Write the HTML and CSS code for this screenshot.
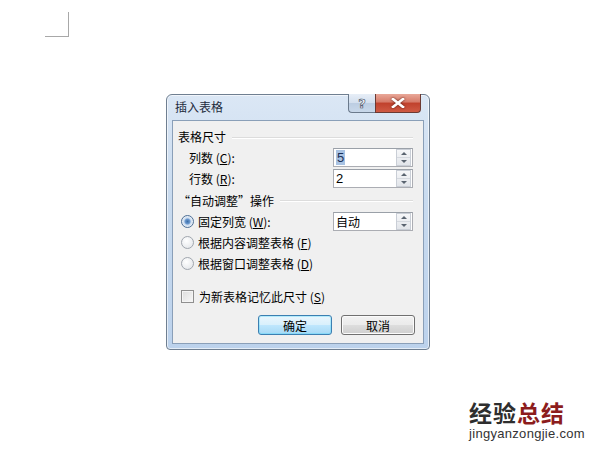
FILE: index.html
```html
<!DOCTYPE html>
<html lang="zh-CN">
<head>
  <meta charset="UTF-8">
  <meta name="viewport" content="width=device-width, initial-scale=1.0">
  <title>插入表格</title>
  <link rel="stylesheet" href="styles.css">
</head>
<body>

<div class="page">
  <!-- page corner mark -->
  <div class="corner"></div>

  <div class="dialog">
    <div class="titlebar">
      <span class="title">插入表格</span>
      <div class="caption-buttons">
        <span class="cap-btn help">?</span>
        <span class="cap-btn close">
          <svg width="14" height="10" viewBox="0 0 14 10">
            <path d="M2 1 L12 9 M12 1 L2 9" stroke="#fff" stroke-width="2.6" stroke-linecap="square"/>
          </svg>
        </span>
      </div>
    </div>

    <div class="client">
      <div class="row group">
        <span>表格尺寸</span>
        <span class="etch"></span>
      </div>
      <div class="row field">
        <span class="label">列数 (<u>C</u>):</span>
        <div class="spin">
          <span class="value"><span class="selected">5</span></span>
          <span class="arrows"><i class="up"></i><i class="down"></i></span>
        </div>
      </div>
      <div class="row field">
        <span class="label">行数 (<u>R</u>):</span>
        <div class="spin">
          <span class="value">2</span>
          <span class="arrows"><i class="up"></i><i class="down"></i></span>
        </div>
      </div>

      <div class="row group tall">
        <span>“自动调整”操作</span>
        <span class="etch"></span>
      </div>
      <div class="row field">
        <label class="option"><span class="radio checked"></span>固定列宽 (<u>W</u>):</label>
        <div class="spin">
          <span class="value cjk">自动</span>
          <span class="arrows"><i class="up"></i><i class="down"></i></span>
        </div>
      </div>
      <div class="row">
        <label class="option"><span class="radio"></span>根据内容调整表格 (<u>F</u>)</label>
      </div>
      <div class="row">
        <label class="option"><span class="radio"></span>根据窗口调整表格 (<u>D</u>)</label>
      </div>

      <div class="row remember">
        <label class="option"><span class="checkbox"></span>为新表格记忆此尺寸 (<u>S</u>)</label>
      </div>

      <div class="buttons">
        <button class="btn default">确定</button>
        <button class="btn">取消</button>
      </div>
    </div>
  </div>

  <!-- watermark -->
  <div class="watermark">
    <div class="wm-title"><span class="dark">经验</span><span class="red">总结</span></div>
    <div class="wm-url">jingyanzongjie.com</div>
  </div>
</div>

</body>
</html>
```

FILE: styles.css
```css
body {
  margin: 0;
  padding: 0;
  background-color: #fff;
  font-family: "Noto Sans CJK SC", "Liberation Sans", sans-serif;
  font-size: 12px;
  color: #000;
}

.page {
  position: relative;
  width: 600px;
  height: 450px;
  padding-top: 12px;
  box-sizing: border-box;
  overflow: hidden;
}

.corner {
  width: 23px;
  height: 24px;
  margin-left: 45px;
  border-right: 1px solid #a8a8a8;
  border-bottom: 1px solid #a8a8a8;
}

.dialog {
  width: 262px;
  height: 254px;
  margin-left: 166px;
  margin-top: 57px;
  border: 1px solid #6f7f91;
  border-radius: 6px 6px 4px 4px;
  background: linear-gradient(to bottom, #dbe7f5 0%, #c9dbef 40%, #bcd2ec 100%);
  display: flex;
  flex-direction: column;
  box-shadow: 0 0 0 1px rgba(255, 255, 255, 0.6) inset;
}

.titlebar {
  height: 25px;
  display: flex;
  justify-content: space-between;
  align-items: flex-start;
  padding-left: 8px;
  padding-right: 8px;
}

.title {
  margin-top: 3px;
  font-size: 12px;
  color: #1e2b3c;
}

.caption-buttons {
  display: flex;
  margin-top: -1px;
}

.cap-btn {
  height: 18px;
  display: flex;
  align-items: center;
  justify-content: center;
  border: 1px solid #6b7a8c;
  border-top: 0;
}

.help {
  width: 26px;
  border-radius: 0 0 0 4px;
  border-right: 0;
  background: linear-gradient(to bottom, #e7eef7 0%, #d3dfee 50%, #bccde2 51%, #c9d8ea 100%);
  color: #f4f7fb;
  font-family: "DejaVu Sans", sans-serif;
  font-weight: bold;
  font-size: 13px;
  -webkit-text-stroke: 0.6px #3a475a;
}

.close {
  width: 44px;
  border-radius: 0 0 4px 0;
  background: linear-gradient(to bottom, #e9a899 0%, #d67a68 45%, #c0412c 50%, #cf5a44 100%);
  border-color: #6b3a33;
}

.close svg {
  filter: drop-shadow(0 0 1px #5a1a10);
}

.client {
  flex: 1;
  margin: 0 5px 5px 5px;
  background-color: #f0f0f0;
  border: 1px solid #8a9fb8;
  padding-top: 5px;
  display: flex;
  flex-direction: column;
}

.row {
  height: 21px;
  display: flex;
  align-items: center;
  padding-right: 10px;
}

.row.tall {
  height: 22px;
}

.group {
  padding-left: 5px;
  color: #000;
}

.etch {
  flex: 1;
  margin-left: 6px;
  margin-top: 2px;
  border-top: 1px solid #dcdcdc;
  border-bottom: 1px solid #fff;
}

.field {
  justify-content: space-between;
}

.label {
  padding-left: 16px;
}

u {
  text-decoration: underline;
  text-underline-offset: 1px;
}

.spin {
  width: 78px;
  height: 17px;
  border: 1px solid #abadb3;
  border-top-color: #9aa0a8;
  background-color: #fff;
  display: flex;
  align-items: center;
  justify-content: space-between;
}

.value {
  padding-left: 2px;
  font-family: "Liberation Sans", "Noto Sans CJK SC", sans-serif;
  font-size: 13px;
}

.value.cjk {
  font-family: "Noto Sans CJK SC", sans-serif;
  font-size: 12px;
}

.selected {
  background-color: #a9c3e3;
  color: #1b2f56;
  padding: 0 1px;
}

.arrows {
  width: 13px;
  height: 15px;
  margin-right: 1px;
  display: flex;
  flex-direction: column;
  border: 1px solid #c9ced6;
  background: linear-gradient(to bottom, #f6f7f9, #e2e5ea);
}

.arrows i {
  flex: 1;
  display: flex;
  align-items: center;
  justify-content: center;
}

.arrows i::before {
  content: "";
  border-left: 3px solid transparent;
  border-right: 3px solid transparent;
}

.arrows .up::before {
  border-bottom: 3px solid #5a6470;
}

.arrows .down {
  border-top: 1px solid #d5d9df;
}

.arrows .down::before {
  border-top: 3px solid #5a6470;
}

.option {
  display: flex;
  align-items: center;
  padding-left: 8px;
}

.radio {
  width: 11px;
  height: 11px;
  border: 1px solid #a0a6ae;
  border-radius: 50%;
  background: radial-gradient(circle at 40% 35%, #fff, #dfe2e6);
  margin-right: 4px;
}

.radio.checked {
  border-color: #4c6e95;
  background: radial-gradient(circle, #3c6ea8 0, #6d9ad0 2.5px, #c8daef 3.5px, #f4f6f8 6px);
}

.remember {
  margin-top: 12px;
  height: 20px;
}

.checkbox {
  width: 11px;
  height: 11px;
  border: 1px solid #8f8f8f;
  background: linear-gradient(135deg, #dcdcdc, #f8f8f8);
  box-shadow: inset 0 0 0 1px #f4f4f4;
  margin-right: 5px;
}

.buttons {
  display: flex;
  justify-content: flex-end;
  gap: 9px;
  padding-right: 8px;
  margin-top: 9px;
}

.btn {
  width: 74px;
  height: 20px;
  padding: 0;
  font-family: "Noto Sans CJK SC", sans-serif;
  font-size: 12px;
  color: #000;
  border: 1px solid #707070;
  border-radius: 3px;
  background: linear-gradient(to bottom, #f2f2f2 0%, #ebebeb 48%, #dddddd 52%, #cfcfcf 100%);
  box-shadow: inset 0 0 0 1px #fbfbfb;
}

.btn.default {
  border-color: #3c7fb1;
  background: linear-gradient(to bottom, #eaf6fd 0%, #d9f0fc 48%, #bee6fd 52%, #a7d9f5 100%);
  box-shadow: inset 0 0 0 1px #48d8fb55;
}

.watermark {
  position: absolute;
  left: 469px;
  top: 400px;
}

.wm-title {
  font-family: "Noto Sans CJK SC", sans-serif;
  font-weight: bold;
  font-size: 23px;
  line-height: 24px;
  letter-spacing: 1px;
}

.wm-title .dark {
  color: #2e2e2e;
}

.wm-title .red {
  color: #8c1c1c;
}

.wm-url {
  margin-top: 3px;
  font-family: "Liberation Sans", sans-serif;
  font-size: 13px;
  line-height: 14px;
  color: #333;
  letter-spacing: 0.3px;
}
```
